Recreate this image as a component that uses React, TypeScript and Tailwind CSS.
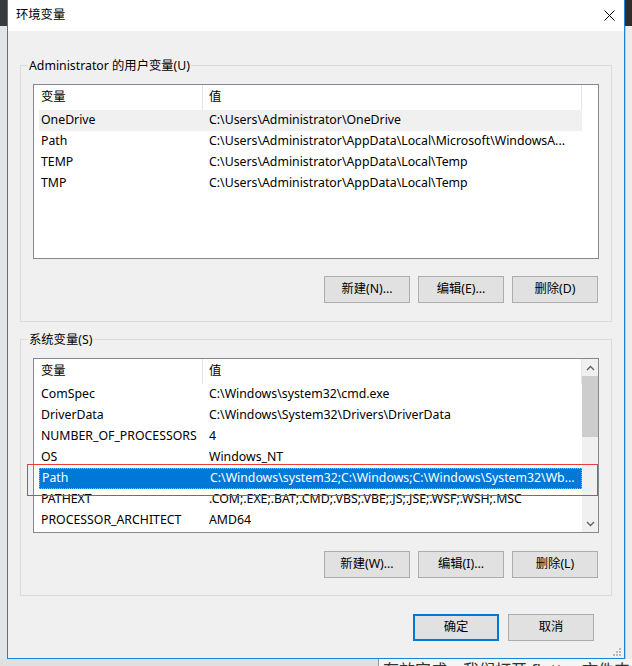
import React from 'react';

type Row = { name: string; value: string };

const userVars: Row[] = [
  { name: 'OneDrive', value: 'C:\\Users\\Administrator\\OneDrive' },
  { name: 'Path', value: 'C:\\Users\\Administrator\\AppData\\Local\\Microsoft\\WindowsA...' },
  { name: 'TEMP', value: 'C:\\Users\\Administrator\\AppData\\Local\\Temp' },
  { name: 'TMP', value: 'C:\\Users\\Administrator\\AppData\\Local\\Temp' },
];

const systemVars: Row[] = [
  { name: 'ComSpec', value: 'C:\\Windows\\system32\\cmd.exe' },
  { name: 'DriverData', value: 'C:\\Windows\\System32\\Drivers\\DriverData' },
  { name: 'NUMBER_OF_PROCESSORS', value: '4' },
  { name: 'OS', value: 'Windows_NT' },
  { name: 'Path', value: 'C:\\Windows\\system32;C:\\Windows;C:\\Windows\\System32\\Wb...' },
  { name: 'PATHEXT', value: '.COM;.EXE;.BAT;.CMD;.VBS;.VBE;.JS;.JSE;.WSF;.WSH;.MSC' },
  { name: 'PROCESSOR_ARCHITECT', value: 'AMD64' },
];

function Header() {
  return (
    <div className="ml-[5px] w-[543px] h-[25px] flex">
      <div className="w-[164px] pl-[2px] flex items-center border-r border-[#e5e5e5]">变量</div>
      <div className="flex-1 pl-[6px] flex items-center border-r border-[#e5e5e5]">值</div>
    </div>
  );
}

function ListRow({ row, state }: { row: Row; state?: 'hover' | 'selected' }) {
  const cls =
    state === 'selected'
      ? 'bg-[#0078d7] text-white border border-dotted border-[#f4a640]'
      : state === 'hover'
        ? 'bg-[#f0f0f0]'
        : '';
  return (
    <div className={`ml-[5px] w-[543px] h-[21px] flex items-center whitespace-nowrap overflow-hidden box-border ${cls}`}>
      <div className="w-[164px] pl-[2px] overflow-hidden shrink-0">{row.name}</div>
      <div className="flex-1 pl-[6px] overflow-hidden">{row.value}</div>
    </div>
  );
}

function Button({ label, primary }: { label: string; primary?: boolean }) {
  return (
    <div
      className={`w-[86px] h-[27px] flex items-center justify-center bg-[#e1e1e1] ${
        primary ? 'border-2 border-[#0078d7]' : 'border border-[#adadad]'
      }`}
    >
      {label}
    </div>
  );
}

function Chevron({ up }: { up?: boolean }) {
  return (
    <svg width="9" height="6" viewBox="0 0 9 6">
      <polyline
        points={up ? '1,5 4.5,1.5 8,5' : '1,1 4.5,4.5 8,1'}
        fill="none"
        stroke="#606060"
        strokeWidth="1.3"
      />
    </svg>
  );
}

function Group({ label, children }: { label: string; children: React.ReactNode }) {
  return (
    <div className="h-[257px] border border-[#dcdcdc] px-[12px] flex flex-col">
      <div className="-mt-[8px] -ml-[5px] px-[1px] h-[16px] leading-[16px] w-fit bg-[#f0f0f0]">{label}</div>
      {children}
    </div>
  );
}

export default function App() {
  return (
    <div className="relative w-[632px] h-[666px] overflow-hidden bg-[#e6e6e6] flex flex-col text-[12.3px] text-black font-['Noto_Sans','Noto_Sans_CJK_SC',sans-serif]">
      <div className="flex h-[659px] shrink-0">
        <div className="w-[7px] flex flex-col">
          <div className="h-[26px] bg-[#3a3a3a]" />
          <div className="flex-1 bg-[#e4e4e4]" />
        </div>

        <div className="w-[618px] h-[659px] border-x border-b border-[#1883d7] bg-[#f0f0f0] flex flex-col">
          <div className="h-[31px] bg-white flex items-center justify-between pl-[8px] pr-[9px]">
            <span>环境变量</span>
            <svg width="11" height="11" viewBox="0 0 11 11">
              <path d="M0.5 0.5 L10.5 10.5 M10.5 0.5 L0.5 10.5" stroke="#000" strokeWidth="1" />
            </svg>
          </div>

          <div className="px-[12px] flex flex-col">
            <div className="mt-[34px]">
              <Group label="Administrator 的用户变量(U)">
                <div className="mt-[10px] h-[175px] border border-[#828790] bg-white">
                  <Header />
                  {userVars.map((r, i) => (
                    <ListRow key={r.name + i} row={r} state={i === 0 ? 'hover' : undefined} />
                  ))}
                </div>
                <div className="mt-[17px] flex justify-end gap-[8px] pr-[1px]">
                  <Button label="新建(N)..." />
                  <Button label="编辑(E)..." />
                  <Button label="删除(D)" />
                </div>
              </Group>
            </div>

            <div className="mt-[17px]">
              <Group label="系统变量(S)">
                <div className="mt-[10px] h-[175px] border border-[#828790] bg-white flex overflow-hidden">
                  <div className="flex-1">
                    <Header />
                    {systemVars.map((r, i) => (
                      <ListRow key={r.name + i} row={r} state={i === 4 ? 'selected' : undefined} />
                    ))}
                  </div>
                  <div className="w-[17px] bg-[#f0f0f0] flex flex-col">
                    <div className="h-[17px] flex items-center justify-center">
                      <Chevron up />
                    </div>
                    <div className="h-[61px] bg-[#cdcdcd]" />
                    <div className="flex-1" />
                    <div className="h-[17px] flex items-center justify-center">
                      <Chevron />
                    </div>
                  </div>
                </div>
                <div className="mt-[18px] flex justify-end gap-[8px] pr-[1px]">
                  <Button label="新建(W)..." />
                  <Button label="编辑(I)..." />
                  <Button label="删除(L)" />
                </div>
              </Group>
            </div>

            <div className="mt-[18px] pr-[18px] flex justify-end gap-[9px]">
              <Button label="确定" primary />
              <Button label="取消" />
            </div>
          </div>
        </div>

        <div className="w-[7px] flex flex-col">
          <div className="h-[26px] bg-[#2e2e2e]" />
          <div className="flex-1 bg-[#ececec] border-l border-[#c8c8c8]" />
        </div>
      </div>

      <div className="h-[7px] flex">
        <div className="w-[378px] bg-[#e0e0e0]" />
        <div className="flex-1 bg-[#f5f5f5] border-l border-[#9a9a9a] pl-[4px] overflow-hidden">
          <div className="mt-[1px] text-[16px] leading-[20px] text-[#333] whitespace-nowrap">有效完成，我们打开 flutter 文件夹</div>
        </div>
      </div>

      {/* resize grip */}
      <svg className="absolute left-[612px] top-[647px]" width="10" height="10" viewBox="0 0 10 10">
        <rect x="7" y="1" width="2" height="2" fill="#b8b8b8" />
        <rect x="4" y="4" width="2" height="2" fill="#b8b8b8" />
        <rect x="7" y="4" width="2" height="2" fill="#b8b8b8" />
        <rect x="1" y="7" width="2" height="2" fill="#b8b8b8" />
        <rect x="4" y="7" width="2" height="2" fill="#b8b8b8" />
        <rect x="7" y="7" width="2" height="2" fill="#b8b8b8" />
      </svg>

      {/* red annotation box */}
      <div className="absolute left-[27px] top-[464px] w-[571px] h-[32px] border border-[#ee3b3b]" />
    </div>
  );
}
